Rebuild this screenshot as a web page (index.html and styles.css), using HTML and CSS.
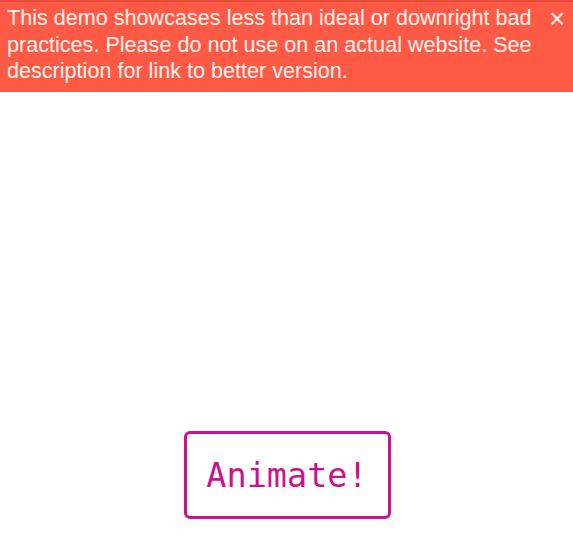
FILE: index.html
```html
<!DOCTYPE html>
<html>
<head>
<meta charset="utf-8">
<link rel="stylesheet" href="styles.css">
</head>
<body>
<div class="banner">
  <p class="banner-text">This demo showcases less than ideal or downright bad practices. Please do not use on an actual website. See description for link to better version.</p>
  <span class="close">×</span>
</div>
<main class="stage">
  <button class="animate">Animate!</button>
</main>
</body>
</html>
```
FILE: styles.css
```css
html, body {
  margin: 0;
  padding: 0;
  background: #ffffff;
}
.banner {
  position: relative;
  background: #fe5a46;
  border-top: 2px solid #e84d3b;
  height: 90px;
  box-sizing: content-box;
  color: #fff4ee;
  font-family: "Liberation Sans", Arial, sans-serif;
}
.banner-text {
  margin: 0;
  padding: 3px 32px 0 7px;
  font-size: 21.6px;
  line-height: 26.5px;
}
.close {
  position: absolute;
  top: 3px;
  right: 8px;
  font-size: 27px;
  line-height: 28px;
}
.stage {
  display: flex;
  justify-content: center;
  padding-top: 339px;
  padding-left: 1px;
}
.animate {
  width: 207px;
  height: 88px;
  border: 3px solid #cc118c;
  border-radius: 6px;
  background: #ffffff;
  color: #cc118c;
  font-family: "DejaVu Sans Mono", monospace;
  font-size: 33.5px;
  padding: 0;
}
```
